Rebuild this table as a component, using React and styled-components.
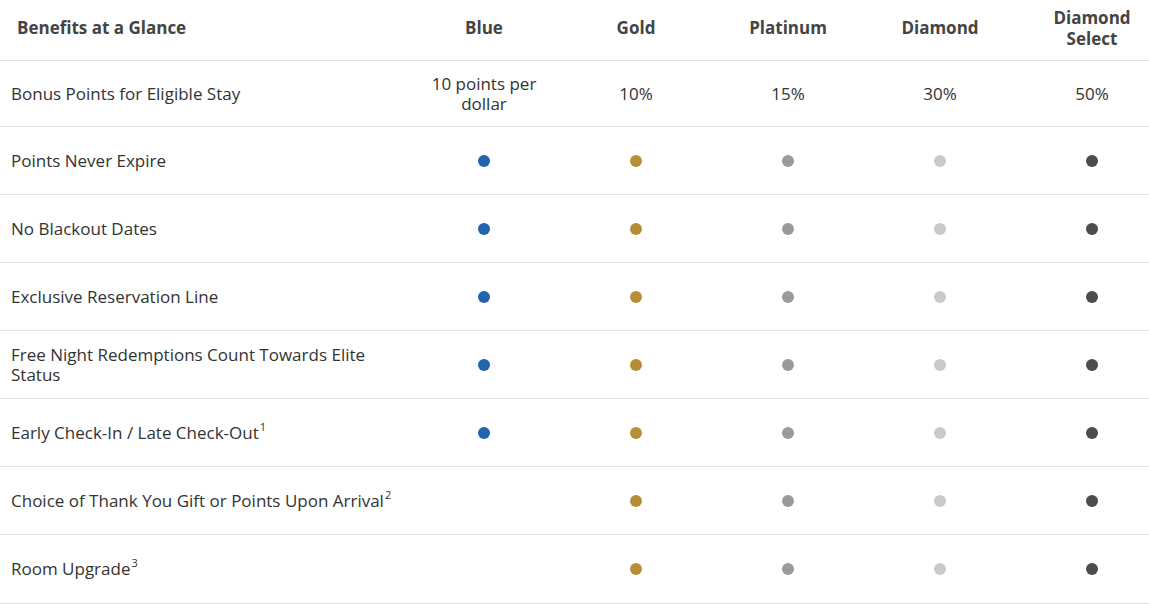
import React from "react";
import styled, { createGlobalStyle } from "styled-components";

const GlobalStyle = createGlobalStyle`
  body {
    margin: 0;
    background: #ffffff;
    font-family: "Open Sans", "Noto Sans", sans-serif;
    color: #333333;
  }
`;

const TIERS = ["Blue", "Gold", "Platinum", "Diamond", "Diamond Select"];

const DOT_COLORS = ["#2463ad", "#b58e37", "#9a9a9a", "#c9c9cb", "#4d4d4d"];

const benefits = [
  { label: "Bonus Points for Eligible Stay", values: ["10 points per dollar", "10%", "15%", "30%", "50%"], first: true },
  { label: "Points Never Expire", dots: [1, 1, 1, 1, 1] },
  { label: "No Blackout Dates", dots: [1, 1, 1, 1, 1] },
  { label: "Exclusive Reservation Line", dots: [1, 1, 1, 1, 1] },
  { label: "Free Night Redemptions Count Towards Elite Status", dots: [1, 1, 1, 1, 1] },
  { label: "Early Check-In / Late Check-Out", note: "1", dots: [1, 1, 1, 1, 1] },
  { label: "Choice of Thank You Gift or Points Upon Arrival", note: "2", dots: [0, 1, 1, 1, 1] },
  { label: "Room Upgrade", note: "3", dots: [0, 1, 1, 1, 1] },
];

const Wrapper = styled.div`
  width: 100%;
  overflow: hidden;
  border-bottom: 2px solid #dcdcdc;
`;

const Row = styled.div`
  box-sizing: border-box;
  display: grid;
  grid-template-columns: 408px repeat(5, 152px);
  align-items: center;
  height: ${(p) => p.$height}px;
  border-bottom: 1px solid #e3e3e3;
  &:last-child {
    border-bottom: none;
  }
`;

const HeadLabel = styled.div`
  padding-left: 17px;
  font-weight: 700;
  font-size: 17px;
  line-height: 21px;
  color: #444444;
  margin-top: -6px;
`;

const HeadTier = styled.div`
  padding: 0 14px;
  text-align: center;
  font-weight: 700;
  font-size: 17px;
  line-height: 21px;
  color: #444444;
  margin-top: -5px;
`;

const BenefitLabel = styled.div`
  padding: 0 0 0 11px;
  font-size: 17px;
  line-height: 20px;
  color: #333333;

  sup {
    font-size: 11px;
    line-height: 0;
    vertical-align: 0;
    position: relative;
    top: -8px;
    margin-left: 1px;
  }
`;

const Value = styled.div`
  padding: 0 20px;
  text-align: center;
  font-size: 17px;
  line-height: 20px;
  color: #333333;
`;

const DotCell = styled.div`
  display: flex;
  justify-content: center;
`;

const Dot = styled.span`
  width: 12px;
  height: 12px;
  border-radius: 50%;
  background: ${(p) => p.$color};
`;

export default function App() {
  return (
    <>
      <GlobalStyle />
      <Wrapper>
        <Row $height={61}>
          <HeadLabel>Benefits at a Glance</HeadLabel>
          {TIERS.map((t) => (
            <HeadTier key={t}>{t}</HeadTier>
          ))}
        </Row>
        {benefits.map((b) => (
          <Row key={b.label} $height={b.first ? 66 : 68}>
            <BenefitLabel>
              {b.label}
              {b.note && <sup>{b.note}</sup>}
            </BenefitLabel>
            {b.values
              ? b.values.map((v, i) => <Value key={i}>{v}</Value>)
              : b.dots.map((d, i) => (
                  <DotCell key={i}>{d ? <Dot $color={DOT_COLORS[i]} /> : null}</DotCell>
                ))}
          </Row>
        ))}
      </Wrapper>
    </>
  );
}
